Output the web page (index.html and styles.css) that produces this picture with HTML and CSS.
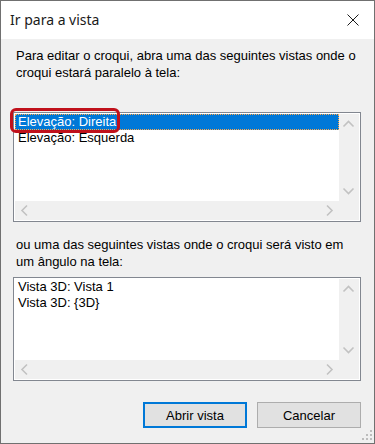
FILE: index.html
```html
<!DOCTYPE html>
<html lang="pt">
<head>
<meta charset="utf-8">
<title>Ir para a vista</title>
<link rel="stylesheet" href="styles.css">
</head>
<body>
<div class="window">
  <div class="titlebar">
    <span class="title">Ir para a vista</span>
    <svg class="close" width="12" height="12" viewBox="0 0 12 12"><path d="M0.5 0.5 L11.5 11.5 M11.5 0.5 L0.5 11.5" stroke="#1a1a1a" stroke-width="1" fill="none"/></svg>
  </div>
  <div class="content">
    <p class="label first">Para editar o croqui, abra uma das seguintes vistas onde o croqui estará paralelo à tela:</p>
    <div class="listbox tall">
      <div class="list">
        <div class="item selected">Elevação: Direita</div>
        <div class="item">Elevação: Esquerda</div>
      </div>
      <div class="vscroll">
        <div class="sbtn"><svg width="20" height="20" viewBox="0 0 20 20"><polyline points="4.5,12.5 9.5,7.5 14.5,12.5" fill="none" stroke="#c2c2c2" stroke-width="1.6"/></svg></div>
        <div class="sbtn"><svg width="20" height="20" viewBox="0 0 20 20"><polyline points="4.5,7.5 9.5,12.5 14.5,7.5" fill="none" stroke="#c2c2c2" stroke-width="1.6"/></svg></div>
      </div>
      <div class="hscroll">
        <div class="sbtn"><svg width="19" height="19" viewBox="0 0 19 19"><polyline points="12,4.5 7,9.5 12,14.5" fill="none" stroke="#c2c2c2" stroke-width="1.6"/></svg></div>
        <div class="sbtn"><svg width="19" height="19" viewBox="0 0 19 19"><polyline points="7,4.5 12,9.5 7,14.5" fill="none" stroke="#c2c2c2" stroke-width="1.6"/></svg></div>
      </div>
      <div class="corner"></div>
    </div>
    <p class="label second">ou uma das seguintes vistas onde o croqui será visto em um ângulo na tela:</p>
    <div class="listbox short">
      <div class="list">
        <div class="item">Vista 3D: Vista 1</div>
        <div class="item">Vista 3D: {3D}</div>
      </div>
      <div class="vscroll">
        <div class="sbtn"><svg width="20" height="20" viewBox="0 0 20 20"><polyline points="4.5,12.5 9.5,7.5 14.5,12.5" fill="none" stroke="#c2c2c2" stroke-width="1.6"/></svg></div>
        <div class="sbtn"><svg width="20" height="20" viewBox="0 0 20 20"><polyline points="4.5,7.5 9.5,12.5 14.5,7.5" fill="none" stroke="#c2c2c2" stroke-width="1.6"/></svg></div>
      </div>
      <div class="hscroll">
        <div class="sbtn"><svg width="19" height="19" viewBox="0 0 19 19"><polyline points="12,4.5 7,9.5 12,14.5" fill="none" stroke="#c2c2c2" stroke-width="1.6"/></svg></div>
        <div class="sbtn"><svg width="19" height="19" viewBox="0 0 19 19"><polyline points="7,4.5 12,9.5 7,14.5" fill="none" stroke="#c2c2c2" stroke-width="1.6"/></svg></div>
      </div>
      <div class="corner"></div>
    </div>
    <div class="buttons">
      <button class="btn default">Abrir vista</button>
      <button class="btn">Cancelar</button>
    </div>
  </div>
  <div class="highlight-mark"></div>
  <svg class="grip" width="12" height="12" viewBox="0 0 12 12">
    <rect x="10" y="0" width="2" height="2" fill="#bdbdbd"/>
    <rect x="6" y="4" width="2" height="2" fill="#bdbdbd"/>
    <rect x="10" y="4" width="2" height="2" fill="#bdbdbd"/>
    <rect x="2" y="8" width="2" height="2" fill="#bdbdbd"/>
    <rect x="6" y="8" width="2" height="2" fill="#bdbdbd"/>
    <rect x="10" y="8" width="2" height="2" fill="#bdbdbd"/>
  </svg>
</div>
</body>
</html>
```

FILE: styles.css
```css
html, body {
  margin: 0;
  padding: 0;
}
body {
  width: 375px;
  height: 444px;
  font-family: "Liberation Sans", Arial, sans-serif;
  font-size: 13px;
  color: #000;
}
.window {
  position: relative;
  box-sizing: border-box;
  width: 375px;
  height: 444px;
  border: 1px solid #707070;
  background: #f0f0f0;
}
.titlebar {
  height: 38px;
  background: #fff;
  display: flex;
  align-items: center;
  justify-content: space-between;
  padding: 0 15px 0 9px;
}
.title {
  font-family: "Noto Sans", "Open Sans", sans-serif;
  font-size: 14px;
  color: #1a1a1a;
  margin-top: -1px;
}
.close {
  display: block;
  margin-top: -1px;
}
.content {
  padding: 0 13px 0 12px;
}
.label {
  margin: 0;
  padding-left: 3px;
  line-height: 17px;
}
.label.first {
  margin-top: 8px;
}
.label.second {
  margin-top: 14px;
}
.listbox {
  box-sizing: border-box;
  border: 1px solid #828790;
  padding: 1px;
  background: #fff;
  display: grid;
  grid-template-columns: 1fr 20px;
}
.listbox.tall {
  margin-top: 31px;
  height: 110px;
  grid-template-rows: 87px 19px;
}
.listbox.short {
  margin-top: 7px;
  height: 104px;
  grid-template-rows: 81px 19px;
}
.list {
  background: #fff;
  overflow: hidden;
}
.item {
  height: 16px;
  line-height: 16px;
  padding-left: 3px;
  white-space: nowrap;
}
.item.selected {
  background: #0078d7;
  color: #fff;
  outline: 1px dotted #ffa84a;
  outline-offset: -1px;
}
.vscroll {
  background: #f0f0f0;
  display: flex;
  flex-direction: column;
  justify-content: space-between;
}
.hscroll {
  background: #f0f0f0;
  display: flex;
  justify-content: space-between;
}
.sbtn {
  display: flex;
}
.sbtn svg {
  display: block;
}
.corner {
  background: #f0f0f0;
}
.buttons {
  margin-top: 21px;
  display: flex;
  justify-content: flex-end;
  gap: 10px;
}
.btn {
  box-sizing: border-box;
  width: 104px;
  height: 26px;
  background: #e1e1e1;
  border: 1px solid #adadad;
  font-family: "Liberation Sans", Arial, sans-serif;
  font-size: 13px;
  color: #000;
  padding: 0;
  margin: 0;
}
.btn.default {
  border: 2px solid #0078d7;
}
.highlight-mark {
  position: absolute;
  left: 9px;
  top: 107px;
  width: 110px;
  height: 25px;
  box-sizing: border-box;
  border: 3px solid #c0111b;
  border-radius: 6px;
}
.grip {
  position: absolute;
  right: 2px;
  bottom: 1px;
}
```
